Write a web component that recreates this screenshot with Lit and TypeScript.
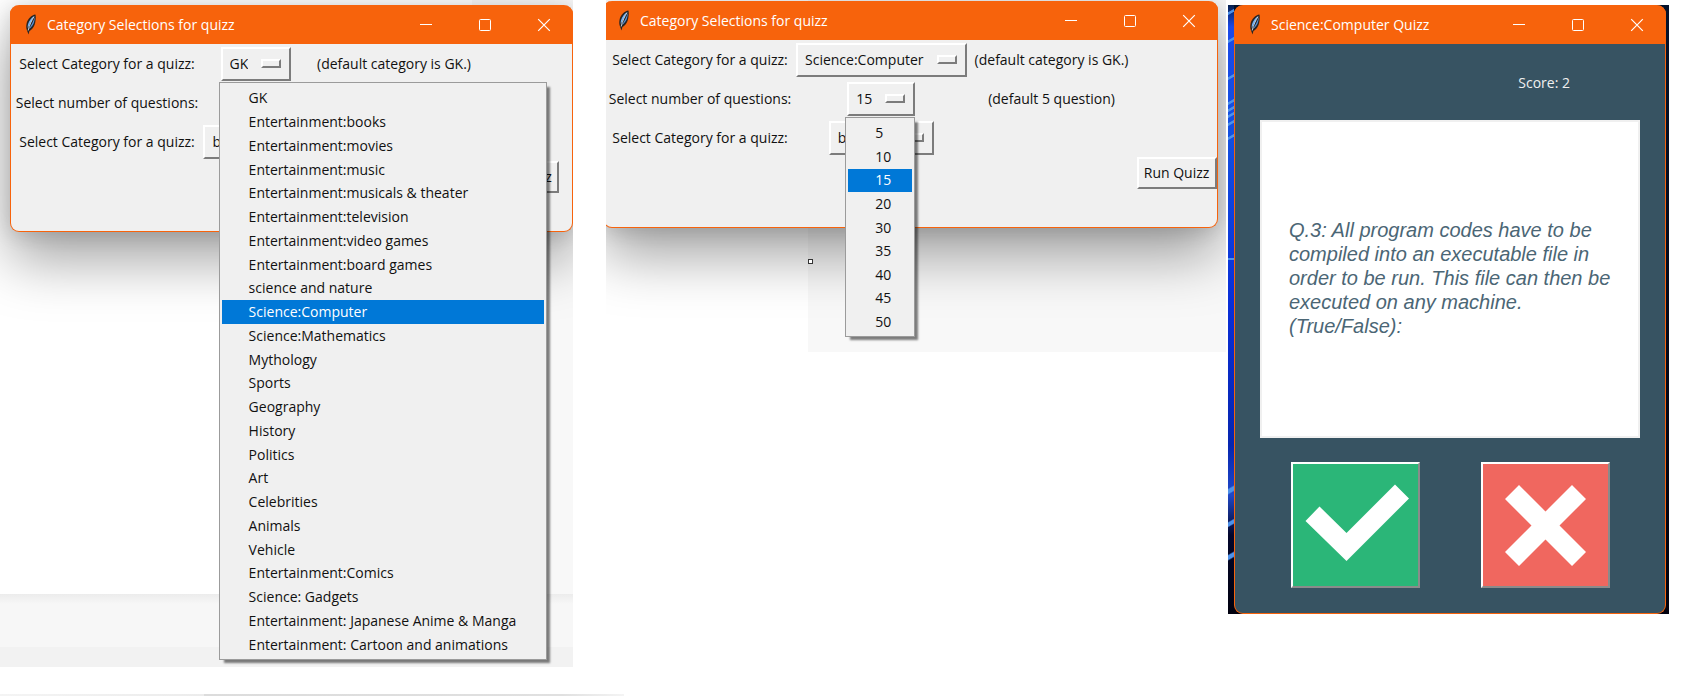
import { LitElement, html, css, svg, nothing } from "lit";
import { customElement, property } from "lit/decorators.js";
import { classMap } from "lit/directives/class-map.js";

const CATEGORIES = [
  "GK",
  "Entertainment:books",
  "Entertainment:movies",
  "Entertainment:music",
  "Entertainment:musicals & theater",
  "Entertainment:television",
  "Entertainment:video games",
  "Entertainment:board games",
  "science and nature",
  "Science:Computer",
  "Science:Mathematics",
  "Mythology",
  "Sports",
  "Geography",
  "History",
  "Politics",
  "Art",
  "Celebrities",
  "Animals",
  "Vehicle",
  "Entertainment:Comics",
  "Science: Gadgets",
  "Entertainment: Japanese Anime & Manga",
  "Entertainment: Cartoon and animations",
];
const COUNTS = ["5", "10", "15", "20", "30", "35", "40", "45", "50"];
const KINDS = ["boolean", "multiple"];

const feather = svg`
  <path d="M10.400 .6C6.600 1.200 2.600 4.800 1.600 9.600c-.6 2.600-.4 5 .4 7L3.600 20.600l.8-3.600C8 15.400 9.800 11.600 10.400 7.600 10.800 4.800 11 2 10.400.6z" fill="#2a2422"/>
  <path d="M9.200 2.200C6.400 3.600 4 6.600 3 10.200c-.3 1.400-.4 2.600-.3 3.800C5 9.600 7 6 9.200 2.200z" fill="#6fb0f5"/>
  <path d="M9.800 2.800C8.600 7.400 6.200 11.400 3.800 15c3-1.800 4.800-4.600 5.500-8 .3-1.500.6-2.800.5-4.200z" fill="#5596e2"/>
  <path d="M9 2.600C6.700 6.400 4.300 11 3.200 16.500" fill="none" stroke="#cfe0ee" stroke-width=".9"/>`;

@customElement("app-window")
class AppWindow extends LitElement {
  @property() heading = "";
  @property({ type: Boolean, reflect: true }) dark = false;

  static styles = css`
    :host {
      display: flex;
      flex-direction: column;
      box-sizing: border-box;
      border: 1px solid #f7630c;
      border-top: 0;
      border-radius: 9px;
      background: #f0f0f0;
      box-shadow: 0 28px 56px rgba(0, 0, 0, 0.36), 0 2px 20px rgba(0, 0, 0, 0.14);
    }
    :host([dark]) {
      background: #375362;
      box-shadow: none;
    }
    .bar {
      display: flex;
      align-items: center;
      height: 39px;
      padding-left: 13px;
      margin: 0 -1px;
      border-radius: 9px 9px 0 0;
      background: #f7630c;
      color: #fff;
    }
    .feather {
      width: 12px;
      height: 21px;
      margin: 0 10px 0 2px;
      flex: none;
    }
    .title {
      flex: 1;
      margin: 0;
      font-size: 14px;
      font-weight: 400;
      line-height: 20px;
      white-space: nowrap;
    }
    .tool {
      display: grid;
      place-items: center;
      width: 59px;
      height: 39px;
      padding: 0;
      border: 0;
      background: none;
      color: inherit;
      font: inherit;
      flex: none;
    }
    .tool svg {
      width: 14px;
      height: 14px;
      fill: none;
      stroke: #fff;
    }
  `;

  render() {
    return html`
      <header class="bar">
        <svg class="feather" viewBox="0 0 12 21" aria-hidden="true">${feather}</svg>
        <h2 class="title">${this.heading}</h2>
        <button class="tool" aria-label="Minimize">
          <svg viewBox="0 0 14 14"><path d="M1 6.500h12" /></svg>
        </button>
        <button class="tool" aria-label="Maximize">
          <svg viewBox="0 0 14 14"><rect x="1.500" y="1.500" width="11" height="11" rx="1" /></svg>
        </button>
        <button class="tool" aria-label="Close">
          <svg viewBox="0 0 14 14"><path d="M1.200 1.200l11.600 11.600M12.800 1.200L1.200 12.800" stroke-width="1.200" /></svg>
        </button>
      </header>
      <slot></slot>
    `;
  }
}

@customElement("option-field")
class OptionField extends LitElement {
  @property() label = "";
  @property() value = "";
  @property() picked = "";
  @property({ attribute: false }) options: string[] = [];
  @property({ type: Boolean }) open = false;

  static styles = css`
    :host {
      display: block;
      position: relative;
    }
    .face {
      position: relative;
      display: block;
    }
    select {
      appearance: none;
      field-sizing: content;
      display: block;
      box-sizing: border-box;
      height: 34px;
      margin: 0;
      padding: 0 41px 0 7px;
      border: 2px solid;
      border-color: #fff #7c7c7c #7c7c7c #fff;
      border-radius: 0;
      background: #f0f0f0;
      color: #111;
      font: inherit;
      outline: 0;
    }
    .knob {
      position: absolute;
      right: 10px;
      top: 12px;
      width: 20px;
      height: 9px;
      box-sizing: border-box;
      border: 2px solid;
      border-color: #fff #7c7c7c #7c7c7c #fff;
      pointer-events: none;
    }
    .menu {
      position: absolute;
      z-index: 5;
      top: 35px;
      left: -2px;
      display: flex;
      flex-direction: column;
      box-sizing: border-box;
      margin: 0;
      padding: 4px 2px 2px;
      list-style: none;
      border: 1px solid #9b9b9b;
      background: #f0f0f0;
      box-shadow: 4px 4px 2px -1px rgba(0, 0, 0, 0.5);
    }
    .long {
      width: 328px;
      height: 578px;
    }
    .short {
      width: 70px;
      height: 220px;
    }
    .item {
      flex: 1;
      display: flex;
      align-items: center;
      padding-left: 27px;
      line-height: 20px;
      white-space: nowrap;
    }
    .picked {
      background: #0078d7;
      color: #fff;
    }
  `;

  render() {
    return html`
      <span class="face">
        <select aria-label=${this.label}>
          ${this.options.map((o) => html`<option ?selected=${o === this.value}>${o}</option>`)}
        </select>
        <span class="knob"></span>
      </span>
      ${this.open
        ? html`<ul class=${classMap({ menu: true, long: this.options.length > 12, short: this.options.length <= 12 })} role="listbox" aria-label=${this.label}>
            ${this.options.map(
              (o) => html`<li class=${classMap({ item: true, picked: o === this.picked })} role="option" aria-selected=${o === this.picked}>${o}</li>`
            )}
          </ul>`
        : nothing}
    `;
  }
}

@customElement("quiz-setup")
class QuizSetup extends LitElement {
  @property() category = "GK";
  @property() count = "5";
  @property() opened = "";

  static styles = css`
    :host {
      display: block;
      min-height: 187px;
    }
    .form {
      display: grid;
      grid-template-columns: 192px minmax(106px, auto) 170px 80px;
      grid-template-rows: repeat(3, 39px) 32px;
      align-items: center;
      justify-items: center;
      justify-content: start;
      white-space: nowrap;
    }
    .run {
      grid-column: 4;
      grid-row: 4;
      width: 80px;
      height: 32px;
      padding: 0;
      border: 2px solid;
      border-color: #fff #7c7c7c #7c7c7c #fff;
      background: #f0f0f0;
      color: #111;
      font: inherit;
    }
    .lead {
      grid-column: 1;
    }
  `;

  render() {
    return html`
      <form class="form" @submit=${(e: Event) => e.preventDefault()}>
        <span class="lead">Select Category for a quizz:</span>
        <option-field label="Category" .options=${CATEGORIES} .value=${this.category} picked="Science:Computer" ?open=${this.opened === "category"}></option-field>
        <span>(default category is GK.)</span>
        <span class="lead">Select number of questions:</span>
        <option-field label="Number of questions" .options=${COUNTS} .value=${this.count} picked="15" ?open=${this.opened === "count"}></option-field>
        <span>(default 5 question)</span>
        <span class="lead">Select Category for a quizz:</span>
        <option-field label="Question type" .options=${KINDS} value="boolean"></option-field>
        <button class="run">Run Quizz</button>
      </form>
    `;
  }
}

@customElement("quiz-board")
class QuizBoard extends LitElement {
  static styles = css`
    :host {
      display: block;
      padding: 28px 25px 25px;
    }
    .score {
      display: block;
      padding-right: 70px;
      text-align: right;
      color: #f0f0f0;
      line-height: 22px;
    }
    .card {
      display: flex;
      align-items: center;
      box-sizing: border-box;
      height: 318px;
      margin: 26px 0 24px;
      padding: 0 29px;
      background: #fff;
      box-shadow: inset 0 0 0 2px #f0f0f0;
    }
    .question {
      margin: 0;
      padding-bottom: 2px;
      color: #4b6675;
      font: italic 20px/24px "Liberation Sans", Arial, sans-serif;
    }
    .answers {
      display: grid;
      grid-template-columns: 1fr 1fr;
      justify-items: center;
    }
    .answer {
      width: 129px;
      height: 126px;
      padding: 0;
      border: 2px solid;
      border-color: #fff #8b8b8b #8b8b8b #fff;
    }
    .answer svg {
      display: block;
      width: 125px;
      height: 122px;
      fill: #fff;
    }
    .yes {
      background: #2bb678;
    }
    .no {
      background: #f0675f;
    }
  `;

  render() {
    return html`
      <output class="score">Score: 2</output>
      <section class="card">
        <p class="question">
          Q.3: All program codes have to be compiled into an executable file in order to be run. This file can then be executed on any machine. (True/False):
        </p>
      </section>
      <div class="answers">
        <button class="answer yes" aria-label="True">
          <svg viewBox="0 0 125 122"><path d="M12.500 57l14-14.500 27 26.500 48.500-48.500L116 34.500 53.500 97z" /></svg>
        </button>
        <button class="answer no" aria-label="False">
          <svg viewBox="0 0 125 122"><path d="M22 35L36 21 62.500 47.500l26.500-26.500 14 14L76.500 61.500l26.500 26.500-14 14L62.500 75.500 36 102l-14-14L48.500 61.500z" /></svg>
        </button>
      </div>
    `;
  }
}

@customElement("app-root")
class AppRoot extends LitElement {
  static styles = css`
    :host {
      display: block;
      min-height: 100vh;
      box-sizing: border-box;
      background: #fff;
      color: #111;
      font: 14px/20px "Open Sans", "Noto Sans", sans-serif;
      overflow: hidden;
    }
    .page {
      display: grid;
      grid-template-columns: 573fr 651fr 441fr;
      column-gap: 2px;
      align-items: start;
      padding-right: 17px;
    }
    .shot {
      box-sizing: border-box;
      overflow: hidden;
      min-width: 0;
    }
    .first {
      height: 667px;
      padding: 5px 0 0 10px;
      background:
        linear-gradient(#f2f2f2, #f2f2f2) 0 100% / 100% 20px no-repeat,
        linear-gradient(#ececec, #f7f7f7 10px) 0 594px / 100% 53px no-repeat,
        linear-gradient(#f8f8f8, #f8f8f8) 100% 0 / 101px 100% no-repeat,
        #fff;
    }
    .second {
      height: 352px;
      margin-left: 31px;
      padding: 1px 8px 0 0;
      background: linear-gradient(#f8f8f8, #f8f8f8) 100% 0 / 418px 100% no-repeat, #fff;
    }
    .second app-window {
      margin-left: -3px;
    }
    .grip {
      box-sizing: border-box;
      width: 5px;
      height: 5px;
      margin: 31px 0 0 202px;
      border: 1px solid #333;
      background: #fff;
    }
    .third {
      --streak: linear-gradient(150deg, transparent 30%, #4f92ea 40% 60%, transparent 70%);
      margin-top: 5px;
      padding: 0 3px 0 6px;
      background:
        var(--streak) 0 4px / 6px 6px no-repeat,
        var(--streak) 0 32px / 6px 6px no-repeat,
        var(--streak) 0 69px / 6px 6px no-repeat,
        var(--streak) 0 94px / 6px 6px no-repeat,
        var(--streak) 0 101px / 6px 6px no-repeat,
        var(--streak) 0 107px / 6px 6px no-repeat,
        var(--streak) 0 115px / 6px 6px no-repeat,
        var(--streak) 0 129px / 6px 6px no-repeat,
        linear-gradient(#4f92ea, #4f92ea) 0 253px / 6px 2px no-repeat,
        var(--streak) 0 478px / 6px 14px no-repeat,
        var(--streak) 0 512px / 6px 12px no-repeat,
        var(--streak) 0 544px / 6px 14px no-repeat,
        linear-gradient(#04122b, #01010f) 100% 0 / calc(100% - 6px) 100% no-repeat,
        linear-gradient(#06204d, #1b49e8 22px, #1450e0 130px, #0a2fd8 300px, #0726b0 440px, #2048c8 490px, #03062c 530px, #01010f);
    }
    .strip {
      height: 2px;
      margin-top: 27px;
      width: 37%;
      background: linear-gradient(90deg, #f4f4f4, #ececec 204px, #dcdcdc 204px, #e0e0e0 90%, #f4f4f4);
    }
  `;

  render() {
    return html`
      <main class="page">
        <section class="shot first">
          <app-window heading="Category Selections for quizz">
            <quiz-setup opened="category"></quiz-setup>
          </app-window>
        </section>
        <section class="shot second">
          <app-window heading="Category Selections for quizz">
            <quiz-setup category="Science:Computer" count="15" opened="count"></quiz-setup>
          </app-window>
          <div class="grip"></div>
        </section>
        <section class="shot third">
          <app-window heading="Science:Computer Quizz" dark>
            <quiz-board></quiz-board>
          </app-window>
        </section>
      </main>
      <div class="strip"></div>
    `;
  }
}
